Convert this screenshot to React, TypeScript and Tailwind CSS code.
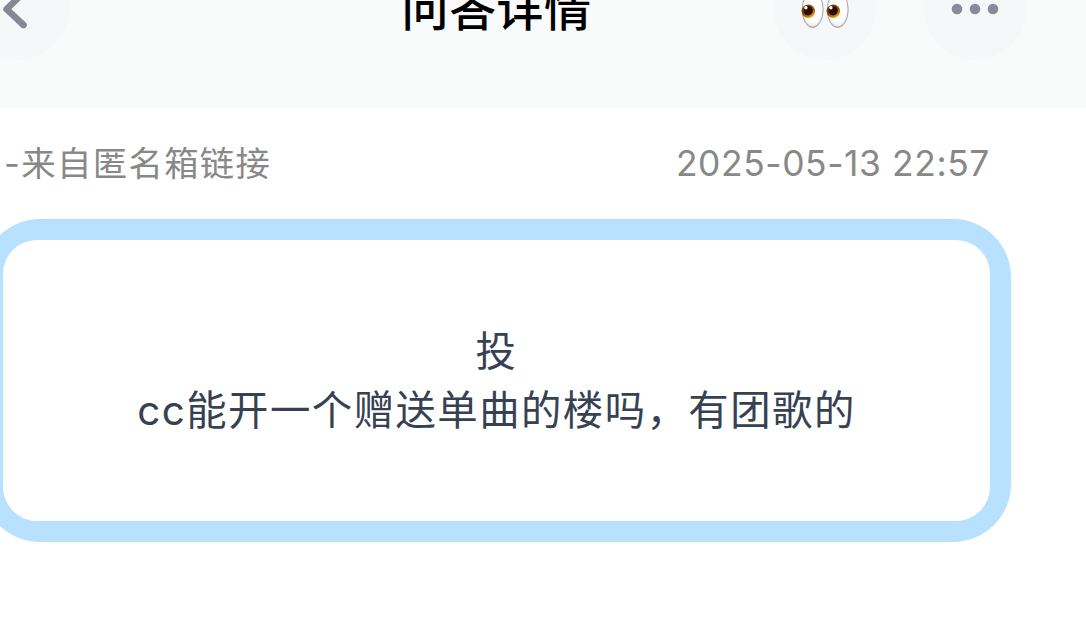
import type { ReactNode } from "react";

interface Question {
  source: string;
  createdAt: string;
  lines: string[];
}

const question: Question = {
  source: "-来自匿名箱链接",
  createdAt: "2025-05-13 22:57",
  lines: ["投", "cc能开一个赠送单曲的楼吗，有团歌的"],
};

function RoundButton({ label, children }: { label: string; children: ReactNode }) {
  return (
    <button
      aria-label={label}
      className="w-[102px] h-[102px] rounded-full bg-[#f6f7f9] flex items-center justify-center"
    >
      {children}
    </button>
  );
}

function BackIcon() {
  return (
    <svg width="32" height="48" viewBox="0 0 32 48" fill="none">
      <path
        d="M21.5 7.6 L4.6 24.2 L21.5 40"
        stroke="#858995"
        strokeWidth="6.6"
        strokeLinecap="round"
        strokeLinejoin="round"
      />
    </svg>
  );
}

function EyesIcon() {
  return (
    <svg width="48" height="40" viewBox="0 0 48 40">
      <defs>
        <radialGradient id="white" cx="50%" cy="45%" r="55%">
          <stop offset="70%" stopColor="#ffffff" />
          <stop offset="90%" stopColor="#eeeeee" />
          <stop offset="100%" stopColor="#a7a7a7" />
        </radialGradient>
        <linearGradient id="iris" x1="0" y1="0" x2="0.6" y2="1">
          <stop offset="0%" stopColor="#6b3500" />
          <stop offset="60%" stopColor="#8a4d00" />
          <stop offset="100%" stopColor="#e0a000" />
        </linearGradient>
      </defs>
      {[0, 25].map((x) => (
        <g key={x} transform={`translate(${x} 0)`}>
          <ellipse cx="11.7" cy="20.6" rx="10.5" ry="18" fill="url(#white)" stroke="#a9a9a9" strokeWidth="1" />
          <circle cx="7.3" cy="22.2" r="6.7" fill="url(#iris)" />
          <circle cx="7.2" cy="21.8" r="4.6" fill="#2a0d02" />
          <circle cx="4.9" cy="18.8" r="1.7" fill="#ffffff" />
        </g>
      ))}
    </svg>
  );
}

function MoreIcon() {
  return (
    <svg width="48" height="12" viewBox="0 0 48 12" fill="#888b98">
      <circle cx="6" cy="6" r="5.3" />
      <circle cx="24" cy="6" r="5.3" />
      <circle cx="42" cy="6" r="5.3" />
    </svg>
  );
}

export default function App() {
  return (
    <div className="w-full h-screen overflow-hidden bg-white font-[Inter,'Noto_Sans_CJK_SC',sans-serif]">
      {/* Header, scrolled partly out of view */}
      <header className="-mt-[42px] h-[150px] bg-[#f9fbfa]">
        <div className="-ml-[33px] w-[1059px] grid grid-cols-[1fr_auto_1fr] items-center">
          <RoundButton label="返回">
            <BackIcon />
          </RoundButton>
          <h1 className="text-[47px] leading-[70px] tracking-[0.5px] font-medium text-black whitespace-nowrap">
            问答详情
          </h1>
          <div className="flex justify-end gap-12">
            <RoundButton label="关注">
              <EyesIcon />
            </RoundButton>
            <RoundButton label="更多">
              <MoreIcon />
            </RoundButton>
          </div>
        </div>
      </header>

      <main className="-ml-[18px] w-[1029px]">
        <div className="h-[111px] pt-px pl-[22px] pr-[21px] flex items-center justify-between leading-[52px] text-[#888888] whitespace-nowrap">
          <span className="text-[34.4px] tracking-[1.35px]">{question.source}</span>
          <time className="text-[35.4px] tracking-[0.6px]">{question.createdAt}</time>
        </div>

        {/* Question card */}
        <section className="h-[323px] p-[21px] rounded-[58px] bg-[#b8e0ff] flex">
          <div className="flex-1 rounded-[34px] bg-white flex flex-col items-center justify-center text-[40.4px] leading-[59px] tracking-[1.45px] text-[#364152] whitespace-nowrap">
            {question.lines.map((line) => (
              <p key={line}>{line}</p>
            ))}
          </div>
        </section>
      </main>
    </div>
  );
}
